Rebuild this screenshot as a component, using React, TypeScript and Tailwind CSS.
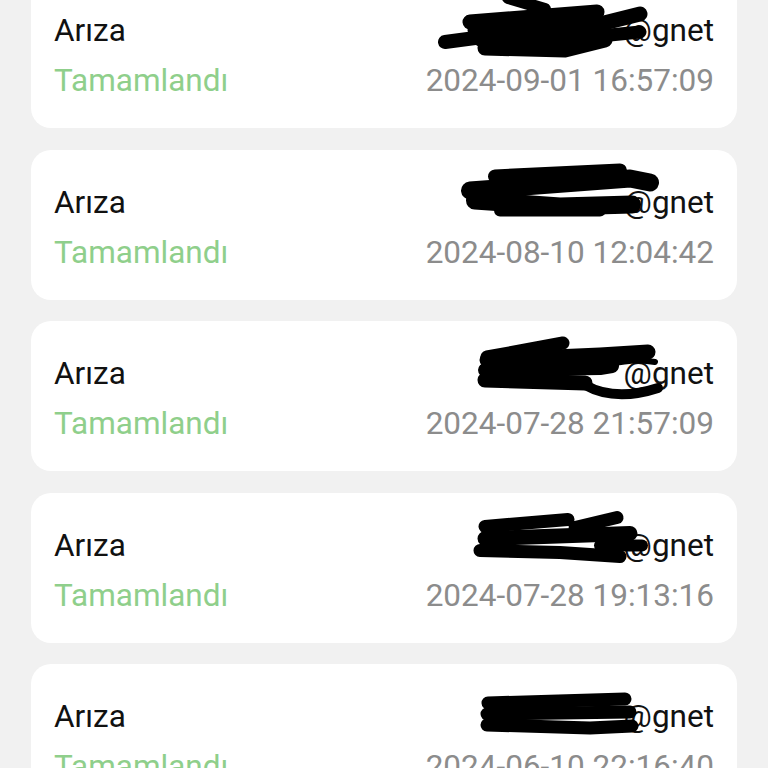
import React from 'react';

interface Stroke {
    d: string;
    w: number;
}

interface Ticket {
    date: string;
    top: number;
    scribble: Stroke[];
}

// redaction marks are drawn in page coordinates; each card's svg viewBox maps onto them
const tickets: Ticket[] = [
    {
        date: '2024-09-01 16:57:09',
        top: -22,
        scribble: [
            { d: 'M445 42 L520 32', w: 14 },
            { d: 'M470 22 L597 12', w: 15 },
            { d: 'M475 30 L600 24 L640 14', w: 15 },
            { d: 'M480 40 L600 36 L640 32', w: 13 },
            { d: 'M485 48 L565 50 L605 40', w: 15 },
            { d: 'M508 -2 L545 9', w: 12 },
            { d: 'M600 42 Q620 33 642 30', w: 6 },
        ],
    },
    {
        date: '2024-08-10 12:04:42',
        top: 149.5,
        scribble: [
            { d: 'M470 190 L630 178 L650 182', w: 18 },
            { d: 'M495 176 L620 170', w: 14 },
            { d: 'M475 200 L560 206 L632 204', w: 18 },
            { d: 'M500 210 L600 210', w: 12 },
        ],
    },
    {
        date: '2024-07-28 21:57:09',
        top: 321,
        scribble: [
            { d: 'M487 357 L563 343', w: 13 },
            { d: 'M487 360 L600 355 L648 352', w: 15 },
            { d: 'M485 370 L600 368 L612 366', w: 14 },
            { d: 'M485 380 L585 383', w: 15 },
            { d: 'M585 385 Q615 402 658 388', w: 10 },
            { d: 'M610 364 Q635 358 655 362', w: 6 },
        ],
    },
    {
        date: '2024-07-28 19:13:16',
        top: 492.5,
        scribble: [
            { d: 'M485 526 L568 519', w: 13 },
            { d: 'M575 527 L617 517', w: 13 },
            { d: 'M485 538 L630 533', w: 15 },
            { d: 'M480 550 L560 552 L620 556', w: 13 },
            { d: 'M600 545 L642 545', w: 12 },
        ],
    },
    {
        date: '2024-06-10 22:16:40',
        top: 664,
        scribble: [
            { d: 'M488 703 L625 699', w: 13 },
            { d: 'M487 714 L630 712', w: 13 },
            { d: 'M487 725 L590 728 L632 726', w: 13 },
        ],
    },
];

function TicketCard({ date, top, scribble }: Ticket) {
    return (
        <div className="relative h-[150px] shrink-0 rounded-[20px] bg-white px-[23px] pt-[35px]">
            <div className="flex items-center justify-between leading-[36px]">
                <span className="text-[#111111]">Arıza</span>
                <span className="text-[#111111]">@gnet</span>
            </div>
            <div className="mt-[14px] flex items-center justify-between leading-[36px]">
                <span className="text-[#8fcf8b]">Tamamlandı</span>
                <span className="text-[#8c8c8c]">{date}</span>
            </div>
            <svg
                className="pointer-events-none absolute inset-0 h-full w-full"
                viewBox={`31 ${top} 706 150`}
                preserveAspectRatio="none"
            >
                {scribble.map((s, i) => (
                    <path
                        key={i}
                        d={s.d}
                        fill="none"
                        stroke="#000"
                        strokeWidth={s.w}
                        strokeLinecap="round"
                        strokeLinejoin="round"
                    />
                ))}
            </svg>
        </div>
    );
}

export default function App() {
    return (
        <div
            className="h-[768px] w-[768px] overflow-hidden bg-[#f1f1f1] text-[31.5px]"
            style={{ fontFamily: 'Roboto, "Noto Sans", sans-serif' }}
        >
            <div className="mt-[-22px] flex flex-col gap-[21.5px] px-[31px]">
                {tickets.map((t) => (
                    <TicketCard key={t.date} {...t} />
                ))}
            </div>
        </div>
    );
}
